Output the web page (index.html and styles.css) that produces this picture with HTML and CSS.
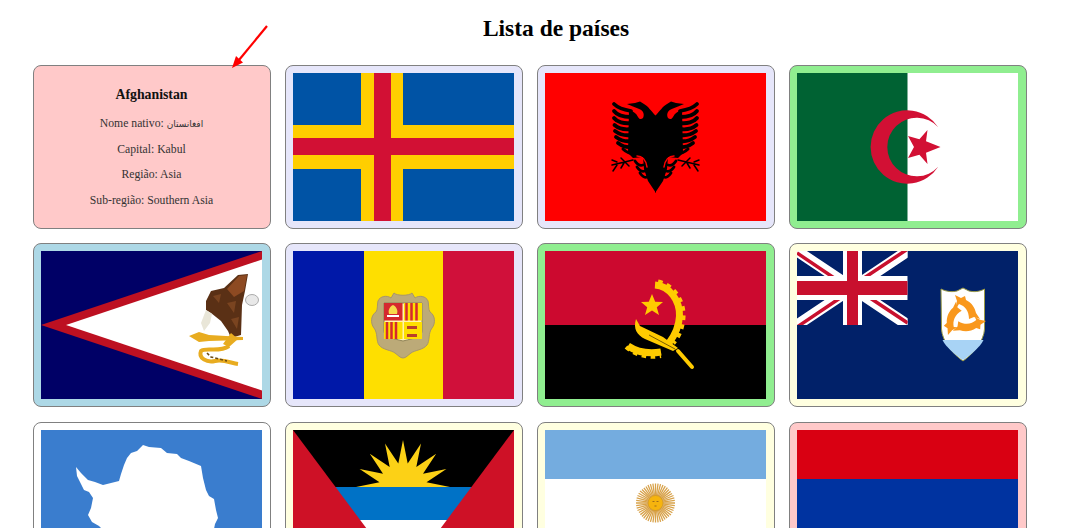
FILE: index.html
```html
<!DOCTYPE html>
<html lang="pt">
<head>
  <meta charset="UTF-8" />
  <title>Lista de países</title>
  <link rel="stylesheet" href="styles.css">
</head>
<body>
  <!-- arrow the author of the screenshot drew over the page -->
  <svg class="arrow" viewBox="0 0 50 60" width="50" height="60">
    <path d="M41 2 L13 36" stroke="#ff0000" stroke-width="2.200" fill="none"/>
    <path d="M6 44 L10 32 L17 38.500 Z" fill="#ff0000"/>
  </svg>

  <h1 class="title">Lista de países</h1>

  <section class="countries">
    <article class="card asia info">
      <h3>Afghanistan</h3>
      <p>Nome nativo: <span class="native" dir="rtl">افغانستان</span></p>
      <p>Capital: Kabul</p>
      <p>Região: Asia</p>
      <p>Sub-região: Southern Asia</p>
    </article>

    <!-- Åland -->
    <article class="card europe">
      <svg class="flag" viewBox="0 0 221 148">
        <rect width="221" height="148" fill="#0053a5"/>
        <path d="M68 0h42v52h111v44H110v52H68V96H0V52h68z" fill="#ffce00"/>
        <path d="M81 0h17v65h123v17H98v66H81V82H0V65h81z" fill="#d21034"/>
      </svg>
    </article>

    <!-- Albania -->
    <article class="card europe">
      <svg class="flag" viewBox="0 0 221 148">
        <rect width="221" height="148" fill="#ff0000"/>
        <g id="half-eagle">
          <path d="M111 43 C106 38 103 33 99 31 L95 28.500 L90 30 L82 31 L88 33.500 L93 35.500 C98 37 100 41 98 45 C96 47 94 46 93 44 C91 40 88 38 84 37 L83 80 L88 85 L98 84 L99 96 L103 108 L111 120 Z" fill="#000"/>
          <g fill="none" stroke="#000" stroke-linecap="round">
            <path d="M86 38 C80 37 73 35 69 31" stroke-width="3.800"/>
            <path d="M86 44 C79 44 72 42 69 38" stroke-width="3.800"/>
            <path d="M86 50 C79 51 72 49 69 45" stroke-width="3.800"/>
            <path d="M86 56 C79 57 73 55 69.500 52" stroke-width="3.800"/>
            <path d="M86 62 C79 63 74 61 70 58" stroke-width="3.800"/>
            <path d="M86 68 C80 69 75 67 71 64" stroke-width="3.800"/>
            <path d="M87 74 C81 75 77 73 73 70" stroke-width="3.800"/>
            <path d="M90 81 C85 81 81 79 78 76" stroke-width="3"/>
            <path d="M88 87 L67 92 M76 85 L84 93 M72 89 L67 87 M72 92 L68 98 M79 90 L76 95" stroke-width="1.500"/>
            <path d="M98 92 C95 93 92 91 90 88" stroke-width="2.800"/>
            <path d="M100 98 C97 99 94 97 92 94" stroke-width="2.800"/>
            <path d="M102 104 C100 105 97 103 95 100" stroke-width="2.800"/>
            <path d="M92 83 C97 83 101 87 102 94" stroke="#ff0000" stroke-width="1.500"/>
          </g>
        </g>
        <use href="#half-eagle" transform="translate(221 0) scale(-1 1)"/>
      </svg>
    </article>

    <!-- Algeria -->
    <article class="card africa">
      <svg class="flag" viewBox="0 0 221 148">
        <rect width="221" height="148" fill="#fff"/>
        <rect width="110.500" height="148" fill="#006233"/>
        <path d="M141.200 54.200 A36.700 36.700 0 1 0 141.200 93.800 A29.300 29.300 0 1 1 141.200 54.200 Z" fill="#d21034"/>
        <path d="M143.500 74 L129 79.800 L130.500 91 L122.400 81.800 L111 85 L117 74 L111 63 L122.400 66.200 L130.500 57 L129 68.200 Z" fill="#d21034"/>
      </svg>
    </article>

    <!-- American Samoa -->
    <article class="card oceania">
      <svg class="flag" viewBox="0 0 221 148">
        <rect width="221" height="148" fill="#000066"/>
        <path d="M0 74 L221 0 V148 Z" fill="#bd1021"/>
        <path d="M25 74 L221 8.500 V139.500 Z" fill="#fff"/>
        <ellipse cx="211" cy="49" rx="6.500" ry="5.500" fill="#e8e8e8" stroke="#999" stroke-width=".8"/>
        <path d="M165 50 L170 40 L183 37 L197 24 L207 23 L204 40 L201 54 L200 84 L190 87 L187 80 L180 70 L170 62 L165 59 Z" fill="#5a3015"/>
        <path d="M186 38 L198 25 L206 24 L203 40 L193 46 Z" fill="#8d4a22"/>
        <path d="M172 45 L180 43 L178 52 Z M186 52 L195 50 L193 62 Z M190 68 L198 66 L196 78 Z" fill="#7a4420"/>
        <path d="M165 59 L171 63 L169 72 L163 80 L160 72 Z" fill="#e9e6d8"/>
        <path d="M148 85 L158 81 L168 84 L202 86 V89 L168 90 L158 91 Z" fill="#e8ac20"/>
        <path d="M190 82 L197 88 L188 96 L182 93 Z" fill="#e8ac20"/>
        <path d="M188 95 C178 102 165 96 160 100 C157 107 166 112 174 110 C182 108 190 112 197 113" fill="none" stroke="#e8ac20" stroke-width="4"/>
        <path d="M166 102 L170 106 L178 108 L186 110" fill="none" stroke="#6b4a12" stroke-width="1.500" stroke-dasharray="3 2"/>
      </svg>
    </article>

    <!-- Andorra -->
    <article class="card europe">
      <svg class="flag" viewBox="0 0 221 148">
        <rect width="221" height="148" fill="#fedf00"/>
        <rect width="71" height="148" fill="#0018a8"/>
        <rect x="150" width="71" height="148" fill="#d0103a"/>
        <path d="M101 42 C104 45 116 45 119 42 L122 47 C126 44 133 45 135 50 C136 54 135 58 137 61 C142 64 143 72 139 77 C135 82 137 90 134 94 C130 99 122 99 118 102 C115 104 113 107 110 107 C107 107 105 104 102 102 C98 99 90 99 86 94 C83 90 85 82 81 77 C77 72 78 64 83 61 C85 58 84 54 85 50 C87 45 94 44 98 47 Z" fill="#bcaa78" stroke="#a8966a" stroke-width="1"/>
        <path d="M91 52 H129 V80 C129 86 122 87 110 90 C98 87 91 86 91 80 Z" fill="#fff3b0" stroke="#8f8259" stroke-width="1"/>
        <rect x="91" y="52" width="18.500" height="17.500" fill="#d5282f"/>
        <path d="M100 54 C104 56 105 60 104 63 H96 C95 60 96 56 100 54 Z" fill="#f7d94c"/>
        <path d="M94 65 H106" stroke="#fff" stroke-width="2"/>
        <rect x="111" y="52" width="18" height="17.500" fill="#fedf00"/>
        <path d="M113.500 52v17.500M118.500 52v17.500M123.500 52v17.500" stroke="#d5282f" stroke-width="2.500"/>
        <rect x="91" y="71" width="18.500" height="17" fill="#fedf00"/>
        <path d="M94 71v17M98.500 71v17M103 71v17" stroke="#d5282f" stroke-width="2.500"/>
        <rect x="111" y="71" width="18" height="17" fill="#fedf00"/>
        <path d="M114 75h10v3h-10zM114 83h10v3h-10z" fill="#b9402a"/>
      </svg>
    </article>

    <!-- Angola -->
    <article class="card africa">
      <svg class="flag" viewBox="0 0 221 148">
        <rect width="221" height="148" fill="#000"/>
        <rect width="221" height="74" fill="#cc092f"/>
        <path d="M107 43 L110.200 50.700 L118 51 L111.800 56.200 L114 64 L107 59.500 L100 64 L102.200 56.200 L96 51 L103.800 50.700 Z" fill="#ffcb00"/>
        <g fill="none" stroke="#ffcb00">
          <path d="M110 34 C125 35 135 50 134.500 65 C134 75 130 84 124 92" stroke-width="7"/>
          <path d="M113 31 C128 34 139 50 138 66 C137.500 76 134 85 128 92" stroke-width="5" stroke-dasharray="4.500 4.500"/>
          <path d="M83 95 C92 101 104 103 116 101" stroke-width="7"/>
          <path d="M81 96 C91 105 104 107 116 105" stroke-width="4" stroke-dasharray="4.500 4.500"/>
          <path d="M133 100 L147 116" stroke-width="4" stroke-linecap="round"/>
        </g>
        <path d="M91 68 C88 78 92 84 100 88 L128 100 L133 97 L118 86 L95 75 Z" fill="#ffcb00"/>
        <path d="M104 84 L130 98" stroke="#7a5c00" stroke-width="1"/>
      </svg>
    </article>

    <!-- Anguilla -->
    <article class="card americas">
      <svg class="flag" viewBox="0 0 221 148">
        <defs>
          <clipPath id="jack"><rect width="110.700" height="74"/></clipPath>
        </defs>
        <rect width="221" height="148" fill="#012169"/>
        <g clip-path="url(#jack)">
          <path d="M0 0 L110.700 74 M110.700 0 L0 74" stroke="#fff" stroke-width="11"/>
          <path d="M0 2 L55 39 M110.700 72 L55 35 M110.700 -2 L55 35 M0 76 L55 39" stroke="#c8102e" stroke-width="3.500"/>
          <path d="M55.500 0 V74" stroke="#fff" stroke-width="19"/>
          <path d="M0 37 H110.700" stroke="#fff" stroke-width="24"/>
          <path d="M55.500 0 V74" stroke="#c8102e" stroke-width="11"/>
          <path d="M0 37 H110.700" stroke="#c8102e" stroke-width="14"/>
        </g>
        <path d="M144 38 C150 41 156 41 160 40 L166 37 L172 40 C177 41 182 41 187.500 38 L187.500 78 C187 90 176 103 166 110 C156 103 145 90 144.500 78 Z" fill="#fff" stroke="#9a9a45" stroke-width="1"/>
        <path d="M145.500 89 H186.500 C183 96 174 104 166 109 C158 104 149 96 145.500 89 Z" fill="#a8d3f5"/>
        <g fill="#f9981d">
          <path id="dolphin" d="M158 44 L164 47 L168 45 L169 49 C175 52 178 57 179 62 L183 68 L177 66 L172 68 C172 60 168 55 162 53 L160 56 L160 50 Z"/>
          <use href="#dolphin" transform="rotate(120 166 66)"/>
          <use href="#dolphin" transform="rotate(240 166 66)"/>
        </g>
      </svg>
    </article>

    <!-- Antarctica -->
    <article class="card polar">
      <svg class="flag" viewBox="0 0 221 148">
        <rect width="221" height="148" fill="#3a7dce"/>
        <path d="M35 37 L40 43 L47 50 L54 52 L62 55 L70 53 L78 51 L80 44 L83 35 L86 28 L90 23 L96 21 L102 15 L108 17 L120 18 L126 23 L136 24 L140 28 L148 31 L160 36 L162 48 L165 60 L168 66 L173 69 L175 80 L177 88 L174 94 L172 104 L166 112 L156 118 L144 122 L130 128 L118 126 L104 122 L92 118 L80 112 L66 104 L58 96 L51 92 L47 85 L50 78 L52 68 L48 62 L43 60 L40 54 L36 46 Z" fill="#fff"/>
      </svg>
    </article>

    <!-- Antigua and Barbuda -->
    <article class="card americas">
      <svg class="flag" viewBox="0 0 221 148">
        <clipPath id="antigua-band"><path d="M0 0 H221 L110.500 148 Z"/></clipPath>
        <rect width="221" height="148" fill="#ce1126"/>
        <g clip-path="url(#antigua-band)">
          <rect width="221" height="57" fill="#000"/>
          <rect y="57" width="221" height="33" fill="#0072c6"/>
          <rect y="90" width="221" height="58" fill="#fff"/>
        </g>
        <path d="M63 57 L86.500 52.300 L66.600 39 L90 43.700 L76.800 23.800 L96.700 37 L92 13.600 L105.300 33.500 L110 10 L114.700 33.500 L128 13.600 L123.300 37 L143.200 23.800 L130 43.700 L153.400 39 L133.500 52.300 L157 57 Z" fill="#fcd116"/>
      </svg>
    </article>

    <!-- Argentina -->
    <article class="card americas">
      <svg class="flag" viewBox="0 0 221 148">
        <rect width="221" height="148" fill="#fff"/>
        <rect width="221" height="49" fill="#74acdf"/>
        <rect y="98" width="221" height="50" fill="#74acdf"/>
        <g stroke="#d8a24a" stroke-width="1.300">
          <path id="sun-rays" d="M110.500 53.500 V92.500 M91 73 H130 M97 59.500 L124 86.500 M124 59.500 L97 86.500 M103 55 L118 91 M118 55 L103 91 M92.500 65.500 L128.500 80.500 M92.500 80.500 L128.500 65.500"/>
          <use href="#sun-rays" transform="rotate(7.500 110.500 73)"/>
          <use href="#sun-rays" transform="rotate(15 110.500 73)"/>
        </g>
        <circle cx="110.500" cy="73" r="7.500" fill="#f6b40e" stroke="#c8912a" stroke-width=".6"/>
        <path d="M107.500 71.500h2M111.500 71.500h2M109.500 76h2" stroke="#a06d1a" stroke-width="1.200"/>
      </svg>
    </article>

    <!-- Armenia -->
    <article class="card asia">
      <svg class="flag" viewBox="0 0 221 148">
        <rect width="221" height="148" fill="#f2a800"/>
        <rect width="221" height="98.500" fill="#0033a0"/>
        <rect width="221" height="49" fill="#d90012"/>
      </svg>
    </article>
  </section>
</body>
</html>
```

FILE: styles.css
```css
html, body {
  height: 528px;
  overflow: hidden;
}

body {
  font-family: "Liberation Serif", "Times New Roman", serif;
  background: #ffffff;
  color: #333;
  margin: 0;
}

.title {
  font-size: 23.500px;
  line-height: 28px;
  text-align: center;
  color: #000;
  margin: 0;
  padding: 14px 0 22.800px 28px;
}

.countries {
  display: grid;
  grid-template-columns: repeat(4, 238px);
  grid-auto-rows: 164px;
  column-gap: 14px;
  row-gap: 14.500px;
  padding-left: 33px;
}

.card {
  border: 1px solid #808080;
  border-radius: 8px;
  padding: 7px 8px 7px 7px;
}

.info {
  text-align: center;
  font-size: 11.700px;
}

.info h3 {
  font-size: 13.800px;
  color: #111;
  margin: 14px 0 14px;
}

.info p {
  margin: 0 0 11.800px;
  line-height: 13.500px;
}

.native {
  font-family: "DejaVu Sans", sans-serif;
  font-size: 9px;
}

.flag {
  display: block;
  width: 221px;
  height: 148px;
}

/* card colour follows the region */
.asia { background: #ffc9c9; }
.europe { background: #e6e6fa; }
.africa { background: #90ee90; }
.oceania { background: #add8e6; }
.americas { background: #ffffe0; }
.polar { background: #ffffff; }

/* drawn on top of the page, not part of the layout */
.arrow {
  position: absolute;
  left: 226px;
  top: 24px;
}
```
